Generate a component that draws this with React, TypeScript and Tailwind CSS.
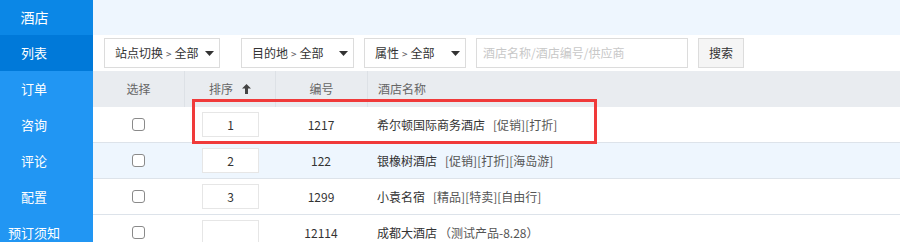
import React from "react";

const font = { fontFamily: '"Noto Sans CJK SC", "Noto Sans", sans-serif' };

function Caret() {
  return (
    <svg width="9" height="5" viewBox="0 0 9 5" className="ml-auto shrink-0">
      <path d="M0 0 L9 0 L4.5 5 Z" fill="#333" />
    </svg>
  );
}

function Dropdown({ label, w, className = "" }: { label: string; w: string; className?: string }) {
  return (
    <div className={`flex h-[30px] shrink-0 items-center border border-[#dcdcdc] bg-white pl-[10px] pr-[5px] text-[12px] text-[#333] ${w} ${className}`}>
      <span className="whitespace-nowrap">{label}</span>
      <span className="mx-[3px] text-[10px] text-[#555]">&gt;</span>
      <span className="whitespace-nowrap">全部</span>
      <Caret />
    </div>
  );
}

function SortArrow() {
  return (
    <svg width="9" height="10" viewBox="0 0 9 10">
      <path d="M4.5 0 L9 4.5 L6 4.5 L6 10 L3 10 L3 4.5 L0 4.5 Z" fill="#444" />
    </svg>
  );
}

const rows = [
  { sort: "1", id: "1217", name: "希尔顿国际商务酒店", tags: "[促销][打折]", bg: "bg-white" },
  { sort: "2", id: "122", name: "银橡树酒店", tags: "[促销][打折][海岛游]", bg: "bg-[#eef6fe]" },
  { sort: "3", id: "1299", name: "小袁名宿", tags: "[精品][特卖][自由行]", bg: "bg-white" },
  { sort: "", id: "12114", name: "成都大酒店", tags: "（测试产品-8.28）", bg: "bg-white" },
];

export default function App() {
  return (
    <div className="relative flex h-[242px] w-[900px] overflow-hidden bg-white" style={font}>
      {/* Sidebar */}
      <div className="flex w-[93px] shrink-0 flex-col bg-[#2196f3] text-white">
        <div className="flex h-[35px] shrink-0 items-center bg-[#0b87e6]">
          <span className="w-[69px] text-center text-[14px]">酒店</span>
        </div>
        <div className="flex h-[36px] shrink-0 items-center bg-[#0079d9]">
          <span className="w-[68px] text-center text-[13px]">列表</span>
        </div>
        {["订单", "咨询", "评论", "配置", "预订须知"].map((t) => (
          <div key={t} className="flex h-[36px] shrink-0 items-center">
            <span className="w-[68px] text-center text-[13px]">{t}</span>
          </div>
        ))}
      </div>

      {/* Main */}
      <div className="flex flex-1 flex-col">
        <div className="h-[35px] shrink-0 bg-[#eef6fe]" />
        <div className="flex h-[36px] shrink-0 items-start bg-white pl-[11px] pt-[3px]">
          <Dropdown label="站点切换" w="w-[116px]" />
          <Dropdown label="目的地" w="w-[113px]" className="ml-[21px]" />
          <Dropdown label="属性" w="w-[102px]" className="ml-[10px]" />
          <div className="ml-[10px] flex h-[30px] w-[212px] shrink-0 items-center border border-[#dcdcdc] bg-white pl-[6px] text-[12px] text-[#c8c8c8]">
            酒店名称/酒店编号/供应商
          </div>
          <div className="ml-[10px] flex h-[30px] w-[46px] shrink-0 items-center justify-center border border-[#dcdcdc] bg-[#f5f5f5] text-[12px] text-[#333]">
            搜索
          </div>
        </div>

        {/* Table header */}
        <div className="flex h-[36px] shrink-0 items-center bg-[#e9ecf0] text-[12px] text-[#666]">
          <div className="flex h-full w-[91px] items-center justify-center">选择</div>
          <div className="flex h-full w-[91px] items-center justify-center gap-[9px] border-l border-[#dde1e6]">
            <span>排序</span>
            <SortArrow />
          </div>
          <div className="flex h-full w-[92px] items-center justify-center border-l border-[#dde1e6]">编号</div>
          <div className="flex h-full flex-1 items-center border-l border-[#dde1e6] pl-[10px]">酒店名称</div>
        </div>

        {/* Rows */}
        {rows.map((r, i) => (
          <div key={i} className={`flex h-[36px] shrink-0 items-center border-b border-[#dde3ea] text-[12px] text-[#333] ${r.bg}`}>
            <div className="flex w-[91px] justify-center">
              <div className="h-[13px] w-[13px] rounded-[3px] border border-[#8a8a8a] bg-white" />
            </div>
            <div className="flex w-[91px] justify-center pl-[2px]">
              <div className="flex h-[25px] w-[57px] items-center justify-center border border-[#e6e6e6] bg-white">
                {r.sort}
              </div>
            </div>
            <div className="w-[92px] text-center">{r.id}</div>
            <div className="flex flex-1 items-center pl-[10px]">
              <span>{r.name}</span>
              <span className={`text-[#555] ${r.tags.startsWith("（") ? "ml-[2px]" : "ml-[8px]"}`}>{r.tags}</span>
            </div>
          </div>
        ))}
      </div>

      {/* Highlight overlay */}
      <div className="pointer-events-none absolute left-[192px] top-[99px] h-[45px] w-[405px] border-[3px] border-[#f03a3a]" />
    </div>
  );
}
